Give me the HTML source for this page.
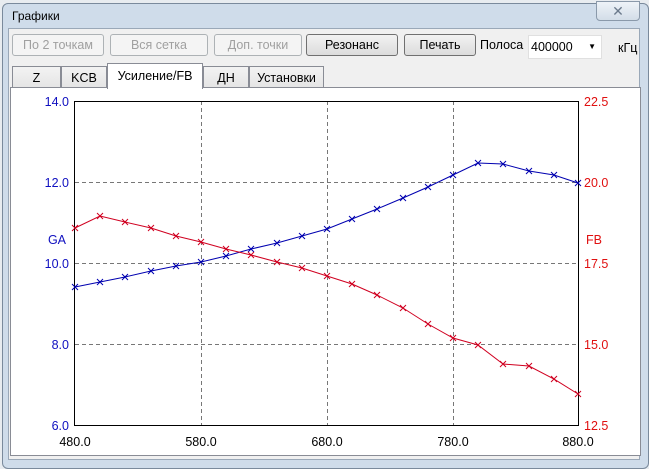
<!DOCTYPE html>
<html><head><meta charset="utf-8"><style>
body{margin:0;width:649px;height:469px;overflow:hidden;background:#e8ecf0;font-family:"Liberation Sans",sans-serif;font-size:12px;position:relative}
.win{position:absolute;left:2px;top:3px;width:645px;height:464px;border:1px solid #7a8a9c;border-radius:6px;background:#cfdcea}
.in{position:absolute;left:8px;top:28px;width:630px;height:430px;background:#f0f0f0;border:1px solid #9aa8b8}
.ab{position:absolute}
.btn{position:absolute;top:34px;height:22px;border:1px solid #707070;border-radius:3px;background:linear-gradient(#f2f2f2,#dcdcdc);text-align:center;line-height:21px;font-size:12.5px;color:#000;box-sizing:border-box}
.dis{border-color:#adb2b5;background:#f4f4f4;color:#a0a0a0}
.tab{position:absolute;top:66px;height:22px;border:1px solid #898c95;border-bottom:none;background:linear-gradient(#f3f3f3,#e4e4e4);text-align:center;line-height:22px;font-size:12.5px;box-sizing:border-box}
</style></head><body>
<div class="win"></div>
<div class="ab" style="left:12px;top:9px;font-size:12px">Графики</div>
<div class="ab" style="left:596px;top:1px;width:44px;height:20px;border:1px solid #8a99aa;border-radius:0 0 4px 4px;background:linear-gradient(#eef3f8,#d3dde8);text-align:center;color:#6b7a8c;font-size:14px;line-height:19px;box-sizing:border-box">✕</div>
<div class="in"></div>
<div class="btn dis" style="left:12px;width:92px">По 2 точкам</div>
<div class="btn dis" style="left:110px;width:98px">Вся сетка</div>
<div class="btn dis" style="left:214px;width:88px">Доп. точки</div>
<div class="btn" style="left:306px;width:92px">Резонанс</div>
<div class="btn" style="left:404px;width:72px">Печать</div>
<div class="ab" style="left:480px;top:38px;font-size:12.5px">Полоса</div>
<div class="ab" style="left:528px;top:35px;width:74px;height:24px;background:#fff;border:1px solid #e0e0e0;box-sizing:border-box;font-size:12.5px;line-height:22px;padding-left:2px">400000<span style="position:absolute;right:5px;top:0;font-size:8px">▼</span></div>
<div class="ab" style="left:618px;top:41px;font-size:12.5px">кГц</div>
<div class="tab" style="left:12px;width:49px">Z</div>
<div class="tab" style="left:61px;width:46px">KCB</div>
<div class="tab" style="left:203px;width:46px">ДН</div>
<div class="tab" style="left:249px;width:75px">Установки</div>
<div class="ab" style="left:10px;top:87px;width:631px;height:369px;background:#fff;border:1px solid #898c95;box-sizing:border-box"></div>
<div class="tab" style="left:107px;top:63px;width:96px;height:26px;background:#fff;line-height:24px">Усиление/FB</div>
<svg class="ab" style="left:0;top:0" width="649" height="469">
<g stroke="#777" stroke-dasharray="4,3" stroke-width="1">
<line x1="201.5" y1="101" x2="201.5" y2="425"/><line x1="327.5" y1="101" x2="327.5" y2="425"/><line x1="453.5" y1="101" x2="453.5" y2="425"/>
<line x1="75" y1="182.5" x2="578" y2="182.5"/><line x1="75" y1="263.5" x2="578" y2="263.5"/><line x1="75" y1="344.5" x2="578" y2="344.5"/>
</g>
<rect x="74.5" y="101.5" width="504" height="324" fill="none" stroke="#000"/>
<g font-size="12.5" fill="#1010c0" text-anchor="end">
<text x="69" y="106">14.0</text><text x="69" y="187">12.0</text><text x="69" y="268">10.0</text><text x="69" y="349">8.0</text><text x="69" y="430">6.0</text>
<text x="66" y="244">GA</text></g>
<g font-size="12.5" fill="#e01010">
<text x="584" y="106">22.5</text><text x="584" y="187">20.0</text><text x="584" y="268">17.5</text><text x="584" y="349">15.0</text><text x="584" y="430">12.5</text>
<text x="586" y="244">FB</text></g>
<g font-size="12.5" fill="#000" text-anchor="middle">
<text x="75" y="446">480.0</text><text x="201" y="446">580.0</text><text x="327" y="446">680.0</text><text x="453" y="446">780.0</text><text x="578" y="446">880.0</text></g>
<polyline id="b" fill="none" stroke="#0000b0" points="75,287 100,282 125,277 151,271 176,266 201,262 226,256 251,249 277,243 302,236 327,229 352,219 377,209 403,198 428,187 453,175 478,163 503,164 529,171 554,175 578,183"/>
<polyline fill="none" stroke="#d00020" points="75,228 100,216 125,222 151,228 176,236 201,242 226,249 251,255 277,262 302,268 327,276 352,284 377,295 403,308 428,324 453,338 478,345 503,364 529,366 554,379 578,394"/>
<g stroke="#0000b0" stroke-width="1">
<path d="M72,284l6,6m0,-6l-6,6 M97,279l6,6m0,-6l-6,6 M122,274l6,6m0,-6l-6,6 M148,268l6,6m0,-6l-6,6 M173,263l6,6m0,-6l-6,6 M198,259l6,6m0,-6l-6,6 M223,253l6,6m0,-6l-6,6 M248,246l6,6m0,-6l-6,6 M274,240l6,6m0,-6l-6,6 M299,233l6,6m0,-6l-6,6 M324,226l6,6m0,-6l-6,6 M349,216l6,6m0,-6l-6,6 M374,206l6,6m0,-6l-6,6 M400,195l6,6m0,-6l-6,6 M425,184l6,6m0,-6l-6,6 M450,172l6,6m0,-6l-6,6 M475,160l6,6m0,-6l-6,6 M500,161l6,6m0,-6l-6,6 M526,168l6,6m0,-6l-6,6 M551,172l6,6m0,-6l-6,6 M575,180l6,6m0,-6l-6,6"/></g>
<g stroke="#d00020" stroke-width="1">
<path d="M72,225l6,6m0,-6l-6,6 M97,213l6,6m0,-6l-6,6 M122,219l6,6m0,-6l-6,6 M148,225l6,6m0,-6l-6,6 M173,233l6,6m0,-6l-6,6 M198,239l6,6m0,-6l-6,6 M223,246l6,6m0,-6l-6,6 M248,252l6,6m0,-6l-6,6 M274,259l6,6m0,-6l-6,6 M299,265l6,6m0,-6l-6,6 M324,273l6,6m0,-6l-6,6 M349,281l6,6m0,-6l-6,6 M374,292l6,6m0,-6l-6,6 M400,305l6,6m0,-6l-6,6 M425,321l6,6m0,-6l-6,6 M450,335l6,6m0,-6l-6,6 M475,342l6,6m0,-6l-6,6 M500,361l6,6m0,-6l-6,6 M526,363l6,6m0,-6l-6,6 M551,376l6,6m0,-6l-6,6 M575,391l6,6m0,-6l-6,6"/></g>
</svg>
</body></html>
